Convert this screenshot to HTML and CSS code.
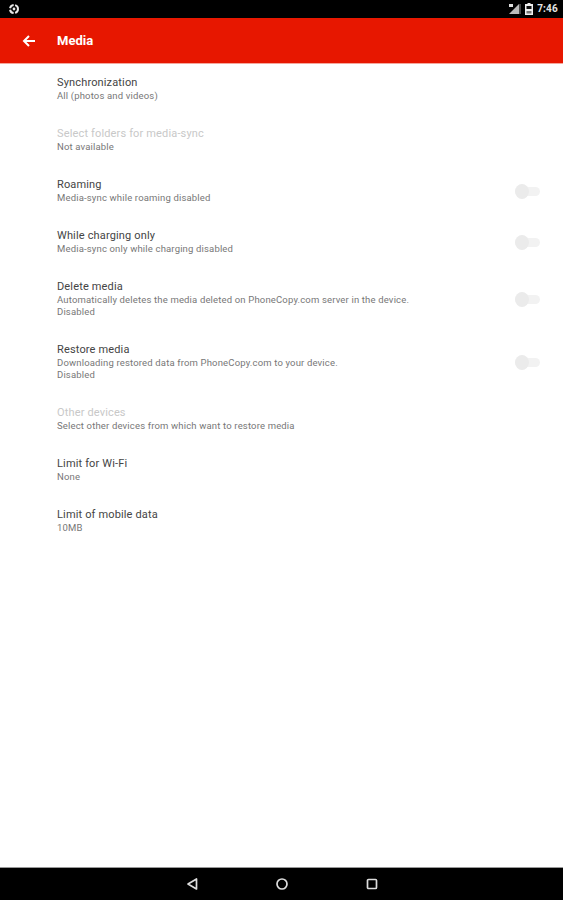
FILE: index.html
```html
<!DOCTYPE html>
<html lang="en">
<head>
<meta charset="utf-8">
<title>Media</title>
<link rel="stylesheet" href="styles.css">
</head>
<body>
<div class="screen">
  <div class="statusbar">
    <svg class="st-left" width="12" height="12" viewBox="0 0 12 12"><circle cx="6" cy="6" r="4" fill="none" stroke="#e8e8e8" stroke-width="2" stroke-dasharray="5 1.5"/><circle cx="6" cy="6" r="1.4" fill="#e8e8e8"/></svg>
    <div class="st-right">
      <svg width="13" height="12" viewBox="0 0 13 12"><path d="M11 1V11H1Z" fill="#bbb"/><path d="M1 1h4v3H1z" fill="#ddd"/><path d="M12 1v10" stroke="#888"/></svg>
      <svg width="8" height="12" viewBox="0 0 8 12"><path d="M2.5 0h3v1H8v11H0V1h2.5z" fill="#eee"/><path d="M1.5 3h5v3h-5z" fill="#111"/><path d="M1.5 8h5v2.5h-5z" fill="#777"/></svg>
      <span class="time">7:46</span>
    </div>
  </div>
  <header class="appbar">
    <svg class="back" width="14" height="14" viewBox="0 0 14 14"><path d="M13 7H2M7 2 2 7l5 5" fill="none" stroke="#fff" stroke-width="2"/></svg>
    <span class="title">Media</span>
  </header>
  <main class="list">
    <div class="item"><div class="text"><div class="name">Synchronization</div><div class="sub">All (photos and videos)</div></div></div>
    <div class="item"><div class="text"><div class="name off">Select folders for media-sync</div><div class="sub">Not available</div></div></div>
    <div class="item"><div class="text"><div class="name">Roaming</div><div class="sub">Media-sync while roaming disabled</div></div><span class="switch"></span></div>
    <div class="item"><div class="text"><div class="name">While charging only</div><div class="sub">Media-sync only while charging disabled</div></div><span class="switch"></span></div>
    <div class="item tall"><div class="text"><div class="name">Delete media</div><div class="sub">Automatically deletes the media deleted on PhoneCopy.com server in the device.</div><div class="sub">Disabled</div></div><span class="switch"></span></div>
    <div class="item tall"><div class="text"><div class="name">Restore media</div><div class="sub">Downloading restored data from PhoneCopy.com to your device.</div><div class="sub">Disabled</div></div><span class="switch"></span></div>
    <div class="item"><div class="text"><div class="name off">Other devices</div><div class="sub">Select other devices from which want to restore media</div></div></div>
    <div class="item"><div class="text"><div class="name">Limit for Wi-Fi</div><div class="sub">None</div></div></div>
    <div class="item"><div class="text"><div class="name">Limit of mobile data</div><div class="sub">10MB</div></div></div>
  </main>
  <nav class="navbar">
    <svg width="14" height="14" viewBox="0 0 14 14"><path d="M11.5 2v10L3 7z" fill="none" stroke="#ddd" stroke-width="1.7" stroke-linejoin="round"/></svg>
    <svg width="14" height="14" viewBox="0 0 14 14"><circle cx="7" cy="7" r="5" fill="none" stroke="#ddd" stroke-width="1.7"/></svg>
    <svg width="14" height="14" viewBox="0 0 14 14"><rect x="2.5" y="2.5" width="9" height="9" rx="1" fill="none" stroke="#ddd" stroke-width="1.7"/></svg>
  </nav>
</div>
</body>
</html>
```
FILE: styles.css
```css
* { box-sizing: border-box; }
html, body { margin: 0; padding: 0; }
body { font-family: Roboto, "Liberation Sans", sans-serif; background: #fff; }
.screen { width: 563px; height: 900px; display: flex; flex-direction: column; overflow: hidden; }
.statusbar { height: 18px; flex: none; background: #000; display: flex; align-items: center; justify-content: space-between; padding: 0 5px 0 8px; }
.st-left { display: block; margin-top: -1px; }
.st-right { display: flex; align-items: center; gap: 4px; }
.time { color: #e4e4e4; font-size: 10px; font-weight: 700; line-height: 12px; letter-spacing: .2px; }
.appbar { height: 46px; flex: none; background: #e71700; display: flex; align-items: center; padding: 1px 0 0 22px; gap: 21px; border-bottom: 1px solid #f5a79c; }
.back { display: block; }
.title { color: #fff; font-size: 13px; font-weight: 700; line-height: 16px; }
.list { flex: 1; padding: 12px 23px 0 57px; display: flex; flex-direction: column; }
.item { height: 51px; display: flex; align-items: center; justify-content: space-between; }
.item.tall { height: 63px; }
.text { display: flex; flex-direction: column; align-self: flex-start; }
.name { font-size: 11px; line-height: 14px; color: #444; letter-spacing: .15px; }
.name.off { color: #c8c8c8; }
.sub { font-size: 9.5px; line-height: 12px; color: #777; letter-spacing: .16px; }
.switch { position: relative; width: 25px; height: 9px; margin-bottom: 25px; background: #f2f2f2; border-radius: 5px; }
.switch::before { content: ""; position: absolute; left: 0; top: -3px; width: 14px; height: 15px; background: #ebebeb; border-radius: 50%; }
.navbar { height: 33px; flex: none; background: #000; border-top: 1px solid #999; display: flex; align-items: center; justify-content: center; gap: 76px; }
```
